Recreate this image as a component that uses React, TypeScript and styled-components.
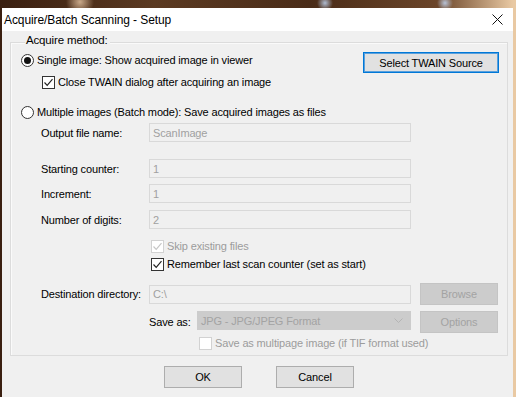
import styled, { createGlobalStyle, css } from "styled-components";

const GlobalStyle = createGlobalStyle`
  body {
    margin: 0;
    background: #2a1a10;
    font-family: "Liberation Sans", Arial, sans-serif;
  }
`;

export default function App() {
  return (
    <>
      <GlobalStyle />
      <Desktop>
        <Dialog>
          <TitleBar>
            <Title>Acquire/Batch Scanning - Setup</Title>
            <CloseIcon width="11" height="11" viewBox="0 0 11 11">
              <path d="M0.5 0.5 L10.5 10.5 M10.5 0.5 L0.5 10.5" stroke="#111" strokeWidth="1" />
            </CloseIcon>
          </TitleBar>
          <Body>
            <Group>
              <GroupLabel>Acquire method:</GroupLabel>

              <Row $top={5} $between>
                <Option>
                  <Radio $checked />
                  <span>Single image: Show acquired image in viewer</span>
                </Option>
                <Button $kind="focus" $width={136}>Select TWAIN Source</Button>
              </Row>

              <Row $top={1} $indent={21}>
                <Option>
                  <Check $checked />
                  <span>Close TWAIN dialog after acquiring an image</span>
                </Option>
              </Row>

              <Row $top={15}>
                <Option>
                  <Radio />
                  <span>Multiple images (Batch mode): Save acquired images as files</span>
                </Option>
              </Row>

              <Row $top={4} $indent={20}>
                <FieldLabel>Output file name:</FieldLabel>
                <Field>ScanImage</Field>
              </Row>

              <Row $top={17} $indent={20}>
                <FieldLabel>Starting counter:</FieldLabel>
                <Field>1</Field>
              </Row>
              <Row $top={6} $indent={20}>
                <FieldLabel>Increment:</FieldLabel>
                <Field>1</Field>
              </Row>
              <Row $top={7} $indent={20}>
                <FieldLabel>Number of digits:</FieldLabel>
                <Field>2</Field>
              </Row>

              <Row $top={9} $indent={130}>
                <Option $disabled>
                  <Check $checked $disabled />
                  <span>Skip existing files</span>
                </Option>
              </Row>
              <Row $top={3} $indent={130}>
                <Option>
                  <Check $checked />
                  <span>Remember last scan counter (set as start)</span>
                </Option>
              </Row>

              <Row $top={12} $indent={20}>
                <FieldLabel>Destination directory:</FieldLabel>
                <Field>C:\</Field>
                <Button $kind="disabled" $width={78} $gap={9}>Browse</Button>
              </Row>

              <Row $top={6} $indent={128}>
                <SaveLabel>Save as:</SaveLabel>
                <Select>
                  <span>JPG - JPG/JPEG Format</span>
                  <svg width="9" height="5" viewBox="0 0 9 5">
                    <path d="M0.5 0.5 L4.5 4.5 L8.5 0.5" fill="none" stroke="#b4b4b4" strokeWidth="1" />
                  </svg>
                </Select>
                <Button $kind="disabled" $width={78} $gap={9}>Options</Button>
              </Row>

              <Row $top={2} $indent={178}>
                <Option $disabled>
                  <Check $disabled />
                  <span>Save as multipage image (if TIF format used)</span>
                </Option>
              </Row>
            </Group>

            <Footer>
              <Button $kind="normal" $width={78}>OK</Button>
              <Button $kind="normal" $width={78}>Cancel</Button>
            </Footer>
          </Body>
        </Dialog>
      </Desktop>
    </>
  );
}

function Radio({ $checked }: { $checked?: boolean }) {
  return <RadioCircle>{$checked && <RadioDot />}</RadioCircle>;
}

function Check({ $checked, $disabled }: { $checked?: boolean; $disabled?: boolean }) {
  return (
    <CheckBox $disabled={$disabled}>
      {$checked && (
        <svg width="11" height="11" viewBox="0 0 11 11">
          <path
            d="M1.5 5.5 L4.2 8.3 L9.5 2.2"
            fill="none"
            stroke={$disabled ? "#c6c6c6" : "#222"}
            strokeWidth="1.2"
          />
        </svg>
      )}
    </CheckBox>
  );
}

const Desktop = styled.div`
  width: 516px;
  height: 397px;
  box-sizing: border-box;
  overflow: hidden;
  display: flex;
  flex-direction: column;
  padding: 8px 3px 0 2px;
  background:
    radial-gradient(circle at 80px 2px, #c9a98a 0, transparent 14px),
    radial-gradient(circle at 325px 3px, #aebbd0 0, transparent 8px),
    radial-gradient(circle at 445px 3px, #b7c2d6 0, transparent 8px),
    linear-gradient(90deg, #3a1f10 0, #5b3a22 30%, #4a2c18 60%, #6b4529 85%, #e9c9a3 99.4%);
`;

const Dialog = styled.div`
  flex: 1;
  display: flex;
  flex-direction: column;
  background: #f0f0f0;
`;

const TitleBar = styled.div`
  height: 23px;
  flex-shrink: 0;
  display: flex;
  align-items: center;
  justify-content: space-between;
  padding: 0 10px 0 2px;
  background: #ffffff;
`;

const Title = styled.span`
  font-size: 12px;
  letter-spacing: -0.1px;
  color: #000;
  padding-top: 1px;
`;

const CloseIcon = styled.svg`
  display: block;
`;

const Body = styled.div`
  display: flex;
  flex-direction: column;
  padding: 11px 5px 0 8px;
  font-size: 11px;
  letter-spacing: -0.15px;
  color: #000;
  white-space: nowrap;
`;

const Group = styled.div`
  display: flex;
  flex-direction: column;
  border: 1px solid #dcdcdc;
  box-shadow: inset 1px 1px 0 #fafafa;
  padding: 0 8px 5px 10px;
`;

const GroupLabel = styled.div`
  align-self: flex-start;
  margin: -10px 0 0 4px;
  padding: 0 2px 0 1px;
  line-height: 14px;
  font-size: 11.5px;
  background: #f0f0f0;
`;

const Row = styled.div<{ $top: number; $indent?: number; $between?: boolean }>`
  display: flex;
  align-items: center;
  justify-content: ${(p) => (p.$between ? "space-between" : "flex-start")};
  margin-top: ${(p) => p.$top}px;
  margin-left: ${(p) => p.$indent ?? 0}px;
  ${(p) =>
    p.$between &&
    css`
      align-items: flex-start;
    `}
`;

const Option = styled.label<{ $disabled?: boolean }>`
  display: flex;
  align-items: center;
  gap: 3px;
  height: 14px;
  margin-top: 1px;
  color: ${(p) => (p.$disabled ? "#9c9c9c" : "#000")};
`;

const RadioCircle = styled.span`
  width: 11px;
  height: 11px;
  border: 1px solid #333;
  border-radius: 50%;
  background: #fff;
  display: flex;
  align-items: center;
  justify-content: center;
  flex-shrink: 0;
`;

const RadioDot = styled.span`
  width: 7px;
  height: 7px;
  border-radius: 50%;
  background: #111;
`;

const CheckBox = styled.span<{ $disabled?: boolean }>`
  width: 11px;
  height: 11px;
  border: 1px solid ${(p) => (p.$disabled ? "#d2d2d2" : "#333")};
  background: #fff;
  display: flex;
  align-items: center;
  justify-content: center;
  flex-shrink: 0;
`;

const FieldLabel = styled.span`
  width: 108px;
  flex-shrink: 0;
`;

const SaveLabel = styled.span`
  width: 48px;
`;

const Field = styled.div`
  width: 262px;
  height: 19px;
  box-sizing: border-box;
  border: 1px solid #d9d9d9;
  background: #f0f0f0;
  color: #a0a0a0;
  padding-left: 3px;
  display: flex;
  align-items: center;
`;

const Select = styled.div`
  width: 214px;
  height: 19px;
  box-sizing: border-box;
  background: #cccccc;
  border: 1px solid #cccccc;
  color: #a3a3a3;
  padding: 0 7px 0 3px;
  display: flex;
  align-items: center;
  justify-content: space-between;
  align-self: flex-start;
`;

const Button = styled.div<{ $kind: "normal" | "focus" | "disabled"; $width: number; $gap?: number }>`
  width: ${(p) => p.$width}px;
  height: 22px;
  box-sizing: border-box;
  margin-left: ${(p) => p.$gap ?? 0}px;
  display: flex;
  align-items: center;
  justify-content: center;
  flex-shrink: 0;
  ${(p) =>
    p.$kind === "disabled"
      ? css`
          background: #cccccc;
          border: 1px solid #c4c4c4;
          color: #a3a3a3;
        `
      : p.$kind === "focus"
      ? css`
          height: 21px;
          background: #e1e1e1;
          border: 1px solid #0078d7;
          box-shadow: inset 0 0 0 1px #5aa0dc;
          color: #000;
        `
      : css`
          background: #e1e1e1;
          border: 1px solid #adadad;
          color: #000;
        `}
`;

const Footer = styled.div`
  display: flex;
  justify-content: center;
  gap: 34px;
  margin-top: 10px;
`;
